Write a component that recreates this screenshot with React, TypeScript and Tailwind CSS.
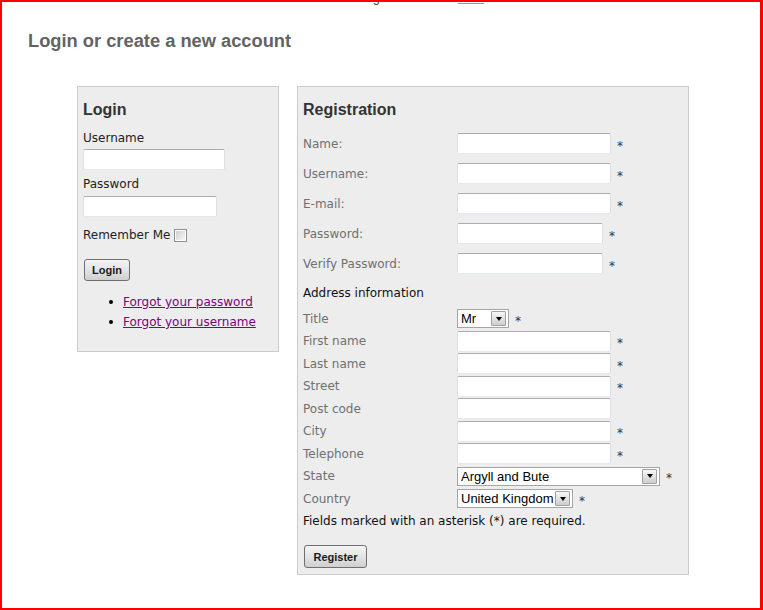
import type { ReactNode } from "react";

const UI_FONT = "font-['Liberation_Sans',Arial,sans-serif]";

// Win7-style text field: darker top edge, pale sides
function TextField({ width, type = "text" }: { width: string; type?: string }) {
  return (
    <input
      type={type}
      className={`h-[21px] ${width} rounded-[2px] border border-t-[#abadb3] border-x-[#dbdfe6] border-b-[#e3e9ef] bg-white px-[2px] text-[13px] outline-none`}
    />
  );
}

function Select({ value, width }: { value: string; width: string }) {
  return (
    <div
      className={`flex h-[19px] ${width} items-center border border-[#a5a5a5] bg-white pl-[3px] pr-[2px] ${UI_FONT} text-[13px] leading-[15px] text-black`}
    >
      <span className="flex-1 truncate">{value}</span>
      <span className="flex h-[15px] w-[15px] items-center justify-center rounded-[1px] border border-[#a0a0a0] bg-linear-to-b from-[#f7f7f7] to-[#cdcdcd]">
        <span className="h-0 w-0 border-x-[3.5px] border-t-[4px] border-x-transparent border-t-black" />
      </span>
    </div>
  );
}

function Required() {
  return <span className="ml-[6px] pt-[4px] text-[#333]">*</span>;
}

function Button({ children, width }: { children: ReactNode; width: string }) {
  return (
    <button
      className={`ml-px ${width} rounded-[3px] border border-[#707070] bg-linear-to-b from-[#f4f4f4] via-[#e4e4e4] to-[#cfcfcf] ${UI_FONT} text-[11px] font-bold text-[#1a1a1a]`}
    >
      {children}
    </button>
  );
}

const ACCOUNT_ROWS = [
  { label: "Name:", width: "w-[154px]", type: "text" },
  { label: "Username:", width: "w-[154px]", type: "text" },
  { label: "E-mail:", width: "w-[154px]", type: "text" },
  { label: "Password:", width: "w-[146px]", type: "password" },
  { label: "Verify Password:", width: "w-[146px]", type: "password" },
];

const ADDRESS_ROWS: { label: string; field: ReactNode; required: boolean }[] = [
  { label: "Title", field: <Select value="Mr" width="w-[52px]" />, required: true },
  { label: "First name", field: <TextField width="w-[154px]" />, required: true },
  { label: "Last name", field: <TextField width="w-[154px]" />, required: true },
  { label: "Street", field: <TextField width="w-[154px]" />, required: true },
  { label: "Post code", field: <TextField width="w-[154px]" />, required: false },
  { label: "City", field: <TextField width="w-[154px]" />, required: true },
  { label: "Telephone", field: <TextField width="w-[154px]" />, required: true },
  { label: "State", field: <Select value="Argyll and Bute" width="w-[203px]" />, required: true },
  { label: "Country", field: <Select value="United Kingdom" width="w-[116px]" />, required: true },
];

function LoginPanel() {
  return (
    <section className="w-[202px] border border-[#cccccc] bg-[#ededed] px-[5px] pt-[13px] pb-[19px] text-[#222]">
      <h2 className={`${UI_FONT} text-[16px] leading-[20px] font-bold text-[#333]`}>Login</h2>
      <label className="mt-[10px] block">Username</label>
      <div className="mt-[3px]">
        <TextField width="w-[142px]" />
      </div>
      <label className="mt-[6px] block">Password</label>
      <div className="mt-[4px]">
        <TextField width="w-[134px]" type="password" />
      </div>
      <div className="mt-[10px] flex items-center">
        <span>Remember Me</span>
        <span className="ml-[4px] flex h-[13px] w-[13px] items-center justify-center border border-[#8f8f8f] bg-white">
          <span className="h-[9px] w-[9px] bg-linear-to-br from-[#d0d0d0] to-[#f6f6f6]" />
        </span>
      </div>
      <div className="mt-[16px] flex">
        <Button width="h-[22px] w-[46px]">Login</Button>
      </div>
      <ul className="mt-[11px] leading-[20px]">
        {["Forgot your password", "Forgot your username"].map((text) => (
          <li key={text} className="flex items-center">
            <span className="ml-[26px] h-[4px] w-[4px] rounded-full bg-black" />
            <a href="#" className="ml-[10px] text-[#800080] underline">
              {text}
            </a>
          </li>
        ))}
      </ul>
    </section>
  );
}

function RegistrationPanel() {
  return (
    <section className="w-[392px] border border-[#cccccc] bg-[#ededed] px-[5px] pt-[13px] pb-[6px] text-[#111]">
      <h2 className={`${UI_FONT} text-[16px] leading-[20px] font-bold text-[#333]`}>Registration</h2>

      <div className="mt-[13px] flex flex-col gap-[9px]">
        {ACCOUNT_ROWS.map((row) => (
          <div key={row.label} className="flex h-[21px] items-center">
            <span className="w-[154px] text-[#707070]">{row.label}</span>
            <TextField width={row.width} type={row.type} />
            <Required />
          </div>
        ))}
      </div>

      <p className="mt-[11px]">Address information</p>

      <div className="mt-[6.5px] flex flex-col">
        {ADDRESS_ROWS.map((row) => (
          <div key={row.label} className="flex h-[22.5px] items-center">
            <span className="w-[154px] text-[#707070]">{row.label}</span>
            {row.field}
            {row.required && <Required />}
          </div>
        ))}
      </div>

      <p className="mt-[3px]">Fields marked with an asterisk (*) are required.</p>

      <div className="mt-[16px] flex">
        <Button width="h-[23px] w-[63px]">Register</Button>
      </div>
    </section>
  );
}

export default function App() {
  return (
    <div className="h-[610px] w-[763px] overflow-hidden border-y-2 border-l-2 border-r-[3px] border-[#ff0000] bg-white font-['DejaVu_Sans',Verdana,sans-serif] text-[12px] leading-[16px]">
      {/* tail of the bar above, cut off by the frame */}
      <div className="flex h-[4px] overflow-hidden">
        <span className={`ml-[371px] -mt-[11px] ${UI_FONT} text-[12px] leading-[14px] text-[#333]`}>g</span>
        <span className="mt-px ml-[78px] h-px w-[26px] bg-[#9a9a9a]" />
      </div>

      <h1 className={`mt-[24px] pl-[26px] ${UI_FONT} text-[18.3px] leading-[22px] font-bold text-[#636363]`}>
        Login or create a new account
      </h1>

      <div className="mt-[34px] ml-[75px] flex items-start gap-[18px]">
        <LoginPanel />
        <RegistrationPanel />
      </div>
    </div>
  );
}
